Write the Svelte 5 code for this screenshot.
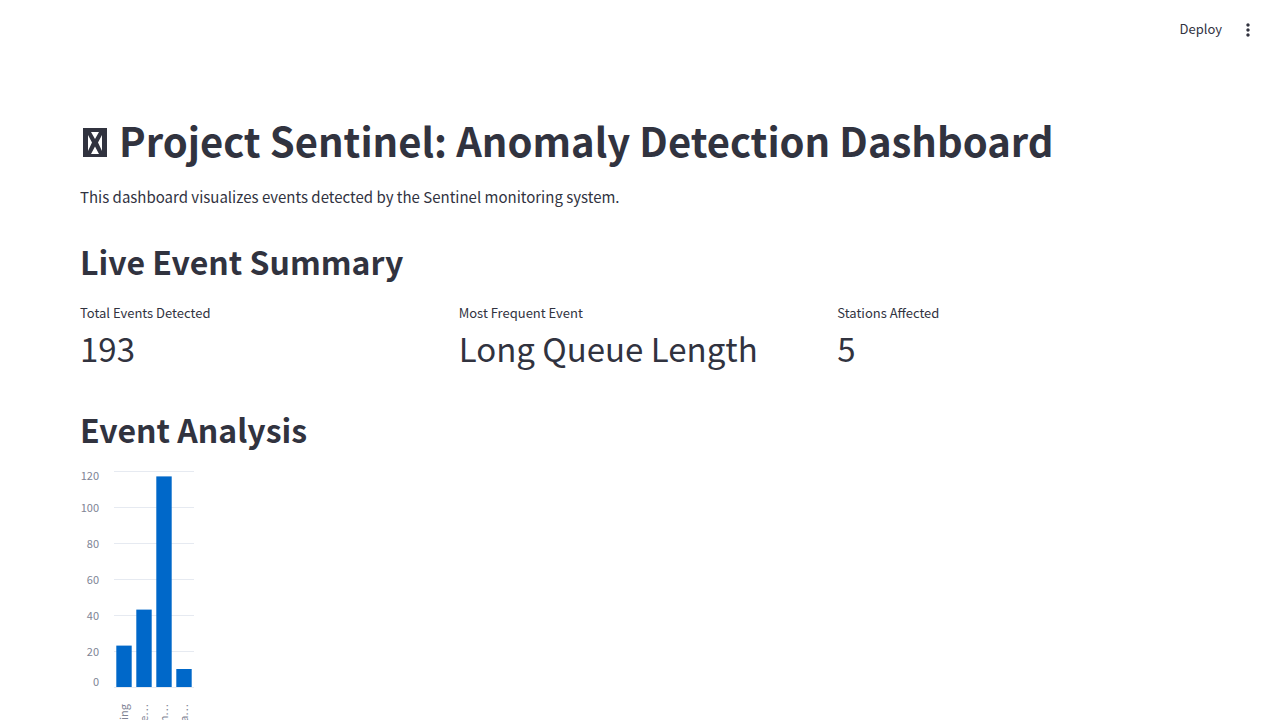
<script>
  const metrics = [
    { label: 'Total Events Detected', value: '193' },
    { label: 'Most Frequent Event', value: 'Long Queue Length' },
    { label: 'Stations Affected', value: '5' }
  ];

  const bars = [
    { label: 'ing', value: 23 },
    { label: 'e…', value: 43 },
    { label: 'n…', value: 117 },
    { label: 'a…', value: 10 }
  ];

  const ticks = [120, 100, 80, 60, 40, 20, 0];
  const plotTop = 5;
  const plotHeight = 216;
  const y = (v) => plotTop + plotHeight - (v / 120) * plotHeight;
  const tickY = (v) => (v === 120 ? y(v) + 9 : v === 0 ? y(v) - 1 : y(v) + 5);
</script>

<div class="app">
  <header>
    <button class="deploy" type="button">Deploy</button>
    <button class="menu" type="button" aria-label="Main menu">
      <svg width="20" height="20" viewBox="0 0 24 24" fill="currentColor" aria-hidden="true">
        <path d="M12 8c1.1 0 2-.9 2-2s-.9-2-2-2-2 .9-2 2 .9 2 2 2zm0 2c-1.1 0-2 .9-2 2s.9 2 2 2 2-.9 2-2-.9-2-2-2zm0 6c-1.1 0-2 .9-2 2s.9 2 2 2 2-.9 2-2-.9-2-2-2z" />
      </svg>
    </button>
  </header>

  <main>
    <h1>
      <svg class="mark" width="30" height="29" viewBox="0 0 30 29" aria-hidden="true">
        <path
          fill="currentColor"
          fill-rule="evenodd"
          d="M3 0H27V29H3ZM11 4H19L15 11ZM11 26H19L15 18.5ZM8 7L12 14.5L8 23ZM22 7L18 14.5L22 23Z"
        />
      </svg>
      Project Sentinel: Anomaly Detection Dashboard
    </h1>
    <p>This dashboard visualizes events detected by the Sentinel monitoring system.</p>

    <h2>Live Event Summary</h2>
    <div class="metrics">
      {#each metrics as m}
        <div class="metric">
          <div class="label">{m.label}</div>
          <div class="value">{m.value}</div>
        </div>
      {/each}
    </div>

    <h2>Event Analysis</h2>
    <svg class="chart" width="116" height="340" role="img" aria-label="Events by type">
      {#each ticks as t}
        <line x1="34" x2="114" y1={y(t) + 0.5} y2={y(t) + 0.5} />
        <text class="tick" x="19" y={tickY(t)} text-anchor="end">{t}</text>
      {/each}
      {#each bars as b, i}
        <rect x={36.3 + i * 20} y={y(b.value)} width="15.4" height={y(0) - y(b.value)} />
        <text text-anchor="end" transform="translate({48 + i * 20} 238) rotate(-90)">{b.label}</text>
      {/each}
    </svg>
  </main>
</div>

<style>
  :global(body) {
    margin: 0;
    background: #fff;
  }

  .app {
    height: 100vh;
    overflow: hidden;
    color: #31333f;
    font-family: 'Noto Sans CJK JP', 'Noto Sans CJK SC', 'Noto Sans', sans-serif;
    font-size: 15px;
  }

  header {
    display: flex;
    align-items: center;
    justify-content: flex-end;
    gap: 4px;
    height: 60px;
    padding: 0 18px;
  }

  button {
    display: flex;
    align-items: center;
    border: 0;
    background: none;
    color: inherit;
    font: inherit;
    cursor: pointer;
  }

  .deploy {
    padding: 4px 8px 6px;
    font-size: 13px;
    line-height: 20px;
  }

  .menu {
    padding: 4px;
  }

  main {
    padding: 32px 80px 0;
  }

  h1,
  h2,
  p {
    margin: 0;
  }

  h1 {
    padding: 22px 0 18px;
    font-size: 40px;
    line-height: 52px;
    font-weight: 700;
  }

  .mark {
    vertical-align: baseline;
  }

  p {
    margin-bottom: 14px;
    line-height: 26px;
  }

  h2 {
    padding: 15px 0;
    font-size: 32px;
    line-height: 44px;
    font-weight: 700;
  }

  .metrics {
    display: grid;
    grid-template-columns: repeat(3, 1fr);
    gap: 16px;
    padding: 4px 0 14px;
  }

  .label {
    padding-bottom: 2px;
    font-size: 13px;
    line-height: 22px;
  }

  .value {
    padding-bottom: 8px;
    font-size: 33px;
    line-height: 44px;
  }

  .chart {
    display: block;
  }

  .chart line {
    stroke: #e6eaf1;
  }

  .chart rect {
    fill: #0068c9;
  }

  .chart text {
    fill: #808495;
    font-size: 11px;
  }
</style>
